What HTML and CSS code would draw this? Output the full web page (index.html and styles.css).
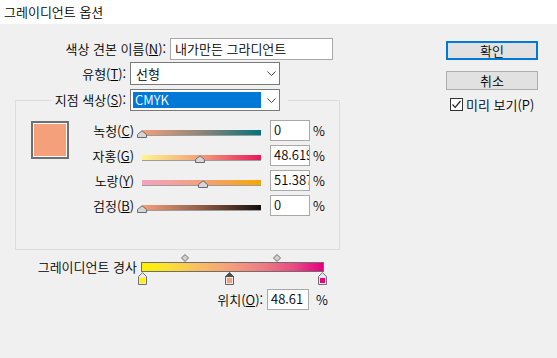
FILE: index.html
```html
<!DOCTYPE html>
<html lang="ko">
<head>
<meta charset="utf-8">
<title>그레이디언트 옵션</title>
<link rel="stylesheet" href="styles.css">
</head>
<body>
<div class="titlebar">그레이디언트 옵션</div>
<div class="main">
  <div class="left">
    <div class="row r-name">
      <span class="lbl w166">색상 견본 이름(<u>N</u>):</span>
      <div class="field name-field">내가만든 그라디언트</div>
    </div>
    <div class="row r-type">
      <span class="lbl w126">유형(<u>T</u>):</span>
      <div class="select">
        <span class="sel-text">선형</span>
        <svg class="chev" width="9" height="5" viewBox="0 0 9 5"><path d="M0.5 0.5 L4.5 4.5 L8.5 0.5" fill="none" stroke="#444" stroke-width="1"/></svg>
      </div>
    </div>
    <fieldset class="group">
      <legend class="legend">
        <div class="legend-in">
          <span class="lbl w73">지점 색상(<u>S</u>):</span>
          <div class="select select-s">
            <span class="sel-text hl">CMYK</span>
            <svg class="chev" width="9" height="5" viewBox="0 0 9 5"><path d="M0.5 0.5 L4.5 4.5 L8.5 0.5" fill="none" stroke="#444" stroke-width="1"/></svg>
          </div>
        </div>
      </legend>
      <div class="group-body">
        <div class="swatch"></div>
        <div class="sliders">
          <div class="srow">
            <span class="slbl">녹청(<u>C</u>)</span>
            <div class="slider"><div class="bar bar-c"></div><svg class="thumb" style="left:-5px" width="10" height="8" viewBox="0 0 10 8"><path d="M0.5 7.5 V4.5 L5 0.8 L9.5 4.5 V7.5 Z" fill="#d6d6d6" stroke="#6a6a6a"/></svg></div>
            <div class="field num">0</div><span class="pct">%</span>
          </div>
          <div class="srow">
            <span class="slbl">자홍(<u>G</u>)</span>
            <div class="slider"><div class="bar bar-m"></div><svg class="thumb" style="left:calc(48.61% - 5px)" width="10" height="8" viewBox="0 0 10 8"><path d="M0.5 7.5 V4.5 L5 0.8 L9.5 4.5 V7.5 Z" fill="#d6d6d6" stroke="#6a6a6a"/></svg></div>
            <div class="field num">48.619</div><span class="pct">%</span>
          </div>
          <div class="srow">
            <span class="slbl">노랑(<u>Y</u>)</span>
            <div class="slider"><div class="bar bar-y"></div><svg class="thumb" style="left:calc(51.38% - 5px)" width="10" height="8" viewBox="0 0 10 8"><path d="M0.5 7.5 V4.5 L5 0.8 L9.5 4.5 V7.5 Z" fill="#d6d6d6" stroke="#6a6a6a"/></svg></div>
            <div class="field num">51.387</div><span class="pct">%</span>
          </div>
          <div class="srow">
            <span class="slbl">검정(<u>B</u>)</span>
            <div class="slider"><div class="bar bar-k"></div><svg class="thumb" style="left:-5px" width="10" height="8" viewBox="0 0 10 8"><path d="M0.5 7.5 V4.5 L5 0.8 L9.5 4.5 V7.5 Z" fill="#d6d6d6" stroke="#6a6a6a"/></svg></div>
            <div class="field num">0</div><span class="pct">%</span>
          </div>
        </div>
      </div>
    </fieldset>
    <div class="ramp-row">
      <span class="lbl ramp-lbl">그레이디언트 경사</span>
      <div class="ramp">
        <div class="marks-top">
          <svg class="mark" style="left:40px" width="8" height="8" viewBox="0 0 8 8"><path d="M4 0.5 L7.5 4 L4 7.5 L0.5 4 Z" fill="#d2d2d2" stroke="#6e6e6e"/></svg>
          <svg class="mark" style="left:132px" width="8" height="8" viewBox="0 0 8 8"><path d="M4 0.5 L7.5 4 L4 7.5 L0.5 4 Z" fill="#d2d2d2" stroke="#6e6e6e"/></svg>
        </div>
        <div class="ramp-bar"></div>
        <div class="marks-bottom">
          <svg class="mark" style="left:-3px" width="9" height="13" viewBox="0 0 9 13"><path d="M0.5 12.5 V4.5 L4.5 0.5 L8.5 4.5 V12.5 Z" fill="#e8e8e8" stroke="#707070"/><rect x="2" y="6" width="5" height="5" fill="#fff100"/></svg>
          <svg class="mark" style="left:84px" width="9" height="13" viewBox="0 0 9 13"><path d="M0.5 12.5 V4.5 L4.5 0.5 L8.5 4.5 V12.5 Z" fill="#e8e8e8" stroke="#606060"/><path d="M0.5 4.5 L4.5 0.5 L8.5 4.5 Z" fill="#505050" stroke="#505050"/><rect x="2" y="6" width="5" height="5" fill="#f4a07a"/></svg>
          <svg class="mark" style="left:177px" width="9" height="13" viewBox="0 0 9 13"><path d="M0.5 12.5 V4.5 L4.5 0.5 L8.5 4.5 V12.5 Z" fill="#e8e8e8" stroke="#707070"/><rect x="2" y="6" width="5" height="5" fill="#e4007f"/></svg>
        </div>
      </div>
    </div>
    <div class="row pos-row">
      <span class="lbl w263">위치(<u>O</u>):</span>
      <div class="field num num-pos">48.61</div><span class="pct pct-pos">%</span>
    </div>
  </div>
  <div class="right">
    <button class="btn btn-default">확인</button>
    <button class="btn">취소</button>
    <div class="check-row">
      <span class="check"><svg width="11" height="11" viewBox="0 0 11 11"><path d="M1.5 5.5 L4.2 8.3 L9.5 2" fill="none" stroke="#222" stroke-width="1.2"/></svg></span>
      <span class="check-lbl">미리 보기(P)</span>
    </div>
  </div>
</div>
</body>
</html>
```
FILE: styles.css
```css
html, body {
  margin: 0;
  padding: 0;
}
body {
  width: 557px;
  height: 358px;
  overflow: hidden;
  background: #f0f0f0;
  color: #000;
  font-family: "Noto Sans CJK KR", "Noto Sans", sans-serif;
  font-size: 13px;
  font-weight: 350;
  line-height: 16px;
}
u {
  text-decoration: underline;
  text-underline-offset: 1px;
}

.titlebar {
  height: 24px;
  box-sizing: border-box;
  background: #fff;
  padding-left: 4px;
  font-size: 13px;
  line-height: 24px;
}

.main {
  display: flex;
}
.left {
  flex: 0 0 446px;
}
.row {
  display: flex;
  align-items: center;
}
.lbl {
  flex: none;
  text-align: right;
  white-space: nowrap;
}
.w166 { width: 166px; margin-right: 4px; }
.w126 { width: 126px; margin-right: 4px; }
.w73 { width: 73px; margin-right: 4px; }
.w263 { width: 263px; margin-right: 4px; }

.field {
  flex: none;
  background: #fff;
  border: 1px solid #a9a9a9;
  box-sizing: border-box;
  overflow: hidden;
  white-space: nowrap;
}

.r-name {
  margin-top: 14px;
  height: 22px;
}
.name-field {
  width: 163px;
  height: 22px;
  padding-left: 4px;
  line-height: 19px;
}

.r-type {
  margin-top: 2px;
  height: 23px;
}
.select {
  flex: none;
  width: 150px;
  height: 23px;
  box-sizing: border-box;
  border: 1px solid #7a7a7a;
  background: #fff;
  display: flex;
  align-items: center;
  padding: 0 3px 0 2px;
}
.select-s {
  height: 22px;
}
.sel-text {
  width: 128px;
  height: 16px;
  line-height: 15px;
  padding-left: 3px;
  box-sizing: border-box;
  margin-right: 6px;
}
.sel-text.hl {
  background: #0078d7;
  color: #fff;
  padding-left: 2px;
}
.chev {
  flex: none;
  display: block;
}

.group {
  margin: 4px 0 0 15px;
  width: 325px;
  box-sizing: border-box;
  border: 1px solid #dcdcdc;
  padding: 9px 0 33px 0;
  min-width: 0;
}
.legend {
  margin-left: 35px;
  padding: 0 8px 0 2px;
}
.legend-in {
  display: flex;
  align-items: center;
  height: 22px;
}

.group-body {
  display: flex;
  align-items: flex-start;
  padding-left: 15px;
}
.swatch {
  flex: none;
  width: 38px;
  height: 38px;
  margin-top: 1px;
  box-sizing: border-box;
  border: 2px solid #707070;
  box-shadow: inset 0 0 0 1px #fbfbfb;
  background: #f4a07a;
}

.sliders {
  display: flex;
  flex-direction: column;
  row-gap: 4px;
}
.srow {
  display: flex;
  align-items: flex-start;
  height: 21px;
}
.slbl {
  flex: none;
  width: 65px;
  margin-right: 8px;
  text-align: right;
  line-height: 21px;
  white-space: nowrap;
}
.slider {
  flex: none;
  position: relative;
  width: 119px;
  height: 21px;
  margin-right: 9px;
}
.bar {
  margin-top: 10px;
  height: 5px;
  box-shadow: 0 1px 0 #9c9c9c;
}
.bar-c { background: linear-gradient(to right, #f3a07b, #8e8576 50%, #00737e); }
.bar-m { background: linear-gradient(to right, #fff48c, #f4a07a 48.6%, #e8175b); }
.bar-y { background: linear-gradient(to right, #f3a2c2, #f4a07a 51.4%, #f7a700); }
.bar-k { background: linear-gradient(to right, #f3a07b, #8f5e47 50%, #140e0c); }
.thumb {
  position: absolute;
  top: 10px;
  display: block;
}

.num {
  width: 40px;
  height: 21px;
  padding-left: 3px;
  font-size: 13px;
  line-height: 17px;
  margin-right: 3px;
}
.pct {
  line-height: 21px;
}

.ramp-row {
  display: flex;
  align-items: flex-start;
  margin-top: 4px;
}
.ramp-lbl {
  width: 137px;
  margin-right: 4px;
  margin-top: 5px;
}
.ramp {
  flex: none;
  width: 183px;
}
.marks-top {
  position: relative;
  height: 8px;
}
.marks-bottom {
  position: relative;
  height: 13px;
}
.mark {
  position: absolute;
  top: 0;
  display: block;
}
.ramp-bar {
  height: 10px;
  box-sizing: border-box;
  border: 1px solid #6e6e6e;
  background: linear-gradient(to right, #fff100 0%, #fde52a 12%, #f9c45c 28%, #f4a07a 48.6%, #ee7d86 66%, #e94a82 84%, #e4007f 100%);
}

.pos-row {
  margin-top: 4px;
  height: 21px;
}
.num-pos {
  width: 42px;
  margin-right: 7px;
}

.right {
  flex: none;
  padding-top: 17px;
  display: flex;
  flex-direction: column;
  align-items: flex-start;
}
.btn {
  width: 92px;
  height: 19px;
  box-sizing: border-box;
  border: 1px solid #adadad;
  background: #e1e1e1;
  padding: 0;
  margin: 0;
  font: inherit;
  line-height: 16px;
  color: #000;
  text-align: center;
}
.btn-default {
  border: 2px solid #0078d7;
  line-height: 14px;
}
.btn + .btn {
  margin-top: 11px;
}
.check-row {
  display: flex;
  align-items: center;
  margin-top: 8px;
  margin-left: 4px;
  height: 13px;
}
.check {
  width: 13px;
  height: 13px;
  box-sizing: border-box;
  border: 1px solid #333;
  background: #fff;
  display: flex;
  align-items: center;
  justify-content: center;
}
.check svg {
  display: block;
}
.check-lbl {
  margin-left: 3px;
  white-space: nowrap;
}
```
